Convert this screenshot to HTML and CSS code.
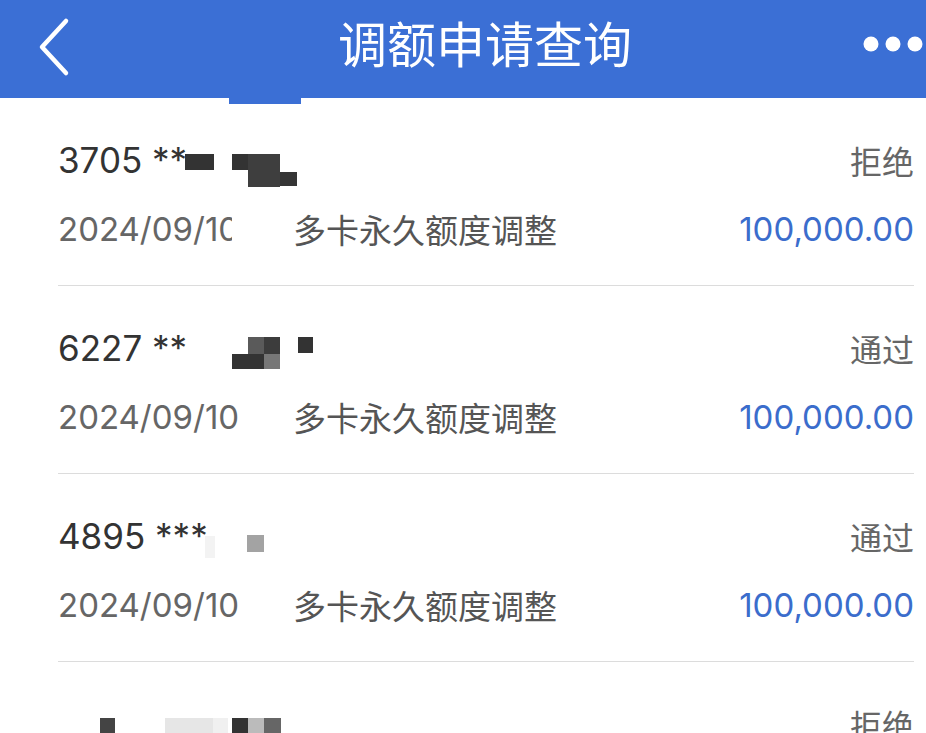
FILE: index.html
```html
<!DOCTYPE html>
<html lang="zh-CN">
<head>
    <meta charset="UTF-8">
    <meta name="viewport" content="width=device-width, initial-scale=1.0">
    <title>调额申请查询</title>
    <link rel="stylesheet" href="styles.css">
</head>
<body>

    <!-- Top bar -->
    <div class="header">
        <div class="back">
            <svg width="40" height="60" viewBox="0 0 40 60">
                <polyline points="30,4 6,30 30,56" fill="none" stroke="#fff" stroke-width="4.5" stroke-linecap="round" stroke-linejoin="round"/>
            </svg>
        </div>
        <div class="title">调额申请查询</div>
        <div class="more">
            <svg width="64" height="20" viewBox="0 0 64 20">
                <circle cx="9" cy="10" r="7.5" fill="#fff"/>
                <circle cx="31" cy="10" r="7.5" fill="#fff"/>
                <circle cx="53" cy="10" r="7.5" fill="#fff"/>
            </svg>
        </div>
        <div class="tab-mark"></div>
    </div>

    <!-- Application list -->
    <div class="list">
        <div class="item">
            <div class="item-top">
                <span class="card-no">3705 **</span>
                <span class="status">拒绝</span>
                <svg class="mosaic" width="300" height="50" viewBox="0 0 300 50">
                    <rect x="127" y="14" width="29" height="16" fill="#333"/>
                    <rect x="174" y="14" width="16" height="16" fill="#333"/>
                    <rect x="190" y="14" width="32" height="33" fill="#3e3e3e"/>
                    <rect x="222" y="32" width="17" height="14" fill="#353535"/>
                </svg>
            </div>
            <div class="item-bottom">
                <span class="date">2024/09/10<i class="smudge"></i></span>
                <span class="type">多卡永久额度调整</span>
                <span class="amount">100,000.00</span>
            </div>
        </div>

        <div class="item">
            <div class="item-top">
                <span class="card-no">6227 **</span>
                <span class="status">通过</span>
                <svg class="mosaic" width="300" height="50" viewBox="0 0 300 50">
                    <rect x="190" y="9" width="16" height="17" fill="#5a5a5a"/>
                    <rect x="206" y="9" width="16" height="17" fill="#3c3c3c"/>
                    <rect x="174" y="26" width="32" height="15" fill="#333"/>
                    <rect x="206" y="26" width="16" height="15" fill="#777"/>
                    <rect x="240" y="9" width="15" height="16" fill="#333"/>
                </svg>
            </div>
            <div class="item-bottom">
                <span class="date">2024/09/10</span>
                <span class="type">多卡永久额度调整</span>
                <span class="amount">100,000.00</span>
            </div>
        </div>

        <div class="item">
            <div class="item-top">
                <span class="card-no">4895 ***</span>
                <span class="status">通过</span>
                <svg class="mosaic" width="300" height="50" viewBox="0 0 300 50">
                    <rect x="147" y="20" width="10" height="22" fill="#f3f3f3"/>
                    <rect x="189" y="19" width="17" height="17" fill="#a3a3a3"/>
                </svg>
            </div>
            <div class="item-bottom">
                <span class="date">2024/09/10</span>
                <span class="type">多卡永久额度调整</span>
                <span class="amount">100,000.00</span>
            </div>
        </div>

        <div class="item">
            <div class="item-top">
                <span class="card-no"></span>
                <span class="status">拒绝</span>
                <svg class="mosaic" width="300" height="50" viewBox="0 0 300 50">
                    <rect x="8" y="29" width="16" height="4" fill="#444"/>
                    <rect x="42" y="14" width="15" height="19" fill="#444"/>
                    <rect x="57" y="30" width="35" height="3" fill="#ccc"/>
                    <rect x="107" y="14" width="48" height="19" fill="#e6e6e6"/>
                    <rect x="155" y="14" width="15" height="19" fill="#f0f0f0"/>
                    <rect x="174" y="14" width="16" height="19" fill="#333"/>
                    <rect x="190" y="14" width="16" height="19" fill="#bbb"/>
                    <rect x="206" y="14" width="17" height="19" fill="#666"/>
                    <rect x="239" y="29" width="17" height="4" fill="#444"/>
                </svg>
            </div>
        </div>
    </div>

</body>
</html>
```

FILE: styles.css
```css
body {
    font-family: 'Inter', 'Noto Sans CJK SC', sans-serif;
    background-color: #fff;
    margin: 0;
    overflow: hidden;
}

.header {
    position: relative;
    height: 98px;
    background-color: #3b6fd5;
    display: flex;
    align-items: center;
}

.back {
    width: 80px;
    padding-left: 36px;
    box-sizing: border-box;
    display: flex;
    margin-top: -4px;
}

.title {
    flex: 1;
    text-align: center;
    color: #fff;
    font-family: 'Noto Sans CJK SC', sans-serif;
    font-size: 49px;
    padding-left: 28px;
    margin-top: -16px;
}

.more {
    width: 64px;
    display: flex;
    margin-top: -10px;
}

.tab-mark {
    position: absolute;
    left: 229px;
    top: 98px;
    width: 72px;
    height: 6px;
    background-color: #3b6fd5;
}

.list { margin: 0; }

.item {
    margin: 0 12px 0 58px;
    padding: 42px 0 36px;
    border-bottom: 1px solid #dcdcdc;
}

.item-top,
.item-bottom {
    position: relative;
    display: flex;
    align-items: center;
    height: 40px;
    line-height: 40px;
}

.item-bottom { margin-top: 29px; }

.card-no {
    flex: 1;
    font-size: 35px;
    color: #333;
}

.status {
    font-family: 'Noto Sans CJK SC', sans-serif;
    font-size: 32px;
    color: #666;
}

.mosaic {
    position: absolute;
    left: 0;
    top: 0;
}

.date {
    position: relative;
    width: 235px;
    font-size: 33px;
    color: #666;
}

.smudge {
    position: absolute;
    left: 174px;
    top: 4px;
    width: 22px;
    height: 34px;
    background-color: #fff;
}

.type {
    flex: 1;
    font-family: 'Noto Sans CJK SC', sans-serif;
    font-size: 33px;
    color: #555;
}

.amount {
    font-size: 33px;
    color: #3b6dcc;
}
```
